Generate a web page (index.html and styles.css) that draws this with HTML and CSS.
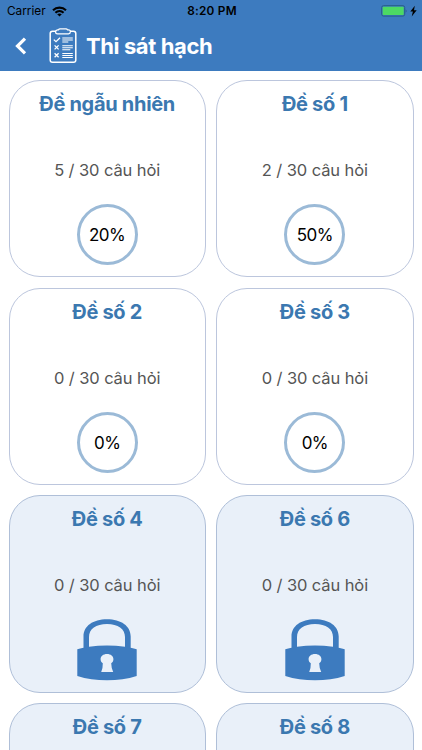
FILE: index.html
```html
<!DOCTYPE html>
<html lang="vi">
<head>
    <meta charset="UTF-8">
    <meta name="viewport" content="width=device-width, initial-scale=1.0">
    <title>Thi sát hạch</title>
    <link rel="stylesheet" href="styles.css">
</head>
<body>
    <svg class="sprite" aria-hidden="true">
        <symbol id="lock" viewBox="0 0 60 62">
            <path fill-rule="evenodd" d="M6.500 28.800V17.500C6.500 7 16 .3 30 .3s23.700 6.700 23.700 17.200V28.800Q57 29.500 59.700 30.300V57Q46 61.300 30 61.300T.3 57V30.300Q3 29.500 6.500 28.800ZM12 27.800Q21 26.600 30 26.600T48 27.800V18C48 10 41 5 30 5S12 10 12 18ZM30 35c-3.800 0-6.400 2.200-6.400 5.200 0 1.800.9 3.200 2.200 4.100Q26 48.500 24.200 53H36.200Q34.200 48.500 34.200 44.300c1.300-.9 2.200-2.300 2.200-4.100 0-3-2.600-5.200-6.400-5.200Z"/>
        </symbol>
    </svg>

    <header class="header">
        <div class="status-bar">
            <div class="carrier">
                <span>Carrier</span>
                <svg class="wifi" viewBox="0 0 15 11">
                    <path d="M1 4.200C4.600.7 10.400.7 14 4.200M3.400 6.700c2.400-2.200 5.800-2.200 8.200 0" fill="none" stroke="currentColor" stroke-width="2.100"/>
                    <path d="M5.200 8.200c1.400-1.100 3.200-1.100 4.600 0L7.500 10.600Z"/>
                </svg>
            </div>
            <span class="time">8:20 PM</span>
            <svg class="battery" viewBox="0 0 36 12">
                <rect x=".7" y=".7" width="23" height="10.400" rx="1.800" fill="none" stroke="#285d88" stroke-width="1"/>
                <rect x="1.700" y="1.700" width="21" height="8.400" rx=".8" fill="#4cd964"/>
                <path d="M24.800 4.200q1.400 1.700 0 3.500Z" fill="#20466f"/>
                <path d="M33.800.8 29.300 6.500h2.600L30.700 11.400l5-6.200H33Z"/>
            </svg>
        </div>
        <div class="nav-bar">
            <svg class="back" viewBox="0 0 12 18">
                <path d="M10 1.600 2.500 9 10 16.400" fill="none" stroke="#fff" stroke-width="3.200"/>
            </svg>
            <svg class="clipboard" viewBox="0 0 28 36" fill="none" stroke="#fff">
                <path d="M7 3.300H3.500Q1.200 3.300 1.200 5.600V32Q1.200 34.300 3.500 34.300H24.500Q26.800 34.300 26.800 32V5.600Q26.800 3.300 24.500 3.300H21" stroke-width="1.500"/>
                <path d="M9.400 1.900Q9.900.8 11 .8H17Q18.100.8 18.600 1.900H19.500Q21.400 1.900 21.400 3.800T19.500 5.800H8.500Q6.600 5.800 6.600 3.900T8.500 1.900Z" stroke-width="1.200"/>
                <path d="M4.800 11.600 7 13.700 11 9.800M5.600 17.400l4 4M9.600 17.400l-4 4M5.600 25.300l4 4M9.600 25.300l-4 4" stroke-width="1.300"/>
                <path d="M13.300 10h10.500M13.300 12h10.500M13.300 14h6M13.300 17.700h10.500M13.300 19.700h10.500M13.300 21.700h8M13.300 25.400h10.500M13.300 27.400h10.500M13.300 29.400h10.500" stroke-width="1.050"/>
            </svg>
            <h1>Thi sát hạch</h1>
        </div>
    </header>

    <main class="exams">
        <div class="card">
            <h2>Đề ngẫu nhiên</h2>
            <p>5 / 30 câu hỏi</p>
            <div class="percent">20%</div>
        </div>
        <div class="card">
            <h2>Đề số 1</h2>
            <p>2 / 30 câu hỏi</p>
            <div class="percent">50%</div>
        </div>
        <div class="card">
            <h2>Đề số 2</h2>
            <p>0 / 30 câu hỏi</p>
            <div class="percent">0%</div>
        </div>
        <div class="card">
            <h2>Đề số 3</h2>
            <p>0 / 30 câu hỏi</p>
            <div class="percent">0%</div>
        </div>
        <div class="card locked">
            <h2>Đề số 4</h2>
            <p>0 / 30 câu hỏi</p>
            <svg class="lock"><use href="#lock"/></svg>
        </div>
        <div class="card locked">
            <h2>Đề số 6</h2>
            <p>0 / 30 câu hỏi</p>
            <svg class="lock"><use href="#lock"/></svg>
        </div>
        <div class="card locked">
            <h2>Đề số 7</h2>
        </div>
        <div class="card locked">
            <h2>Đề số 8</h2>
        </div>
    </main>
</body>
</html>
```
FILE: styles.css
```css
* {
    margin: 0;
    padding: 0;
    box-sizing: border-box;
}

body {
    height: 100vh;
    display: flex;
    flex-direction: column;
    overflow: hidden;
    background: #fff;
    font-family: Inter, "Liberation Sans", sans-serif;
    color: #000;
}

.sprite {
    display: none;
}

.header {
    flex: none;
    height: 71px;
    background: #3d7bbf;
}

/* status bar */
.status-bar {
    height: 22px;
    padding: 0 5px 0 7px;
    display: grid;
    grid-template-columns: 1fr auto 1fr;
    align-items: center;
    font-size: 11.800px;
}

.carrier {
    display: flex;
    align-items: center;
    gap: 6px;
}

.wifi {
    width: 15px;
    height: 11px;
}

.time {
    font-weight: 600;
    letter-spacing: 0.25px;
}

.battery {
    width: 36px;
    height: 12px;
    justify-self: end;
}

/* navigation */
.nav-bar {
    height: 48px;
    padding-left: 15px;
    display: flex;
    align-items: center;
}

.back {
    width: 12px;
    height: 18px;
}

.clipboard {
    width: 28px;
    height: 36px;
    margin: 0 9px 0 22px;
}

h1 {
    color: #fff;
    font-size: 22px;
    font-weight: 700;
    letter-spacing: -0.4px;
}

/* exam list */
.exams {
    flex: 1;
    min-height: 0;
    overflow: hidden;
    padding: 9px 8.500px 0;
    display: grid;
    grid-template-columns: 1fr 1fr;
    grid-auto-rows: 197.300px;
    gap: 10.400px;
}

.card {
    display: flex;
    flex-direction: column;
    align-items: center;
    border: 1px solid #bcc6dd;
    border-radius: 31px;
}

.card.locked {
    background: #e9f0f9;
    border-color: #afbfd8;
}

.card h2 {
    margin-top: 9px;
    color: #3b78b0;
    font-size: 20px;
    font-weight: 700;
    letter-spacing: -0.3px;
    line-height: 28px;
}

.card p {
    margin-top: 40px;
    color: #555;
    font-size: 16.500px;
    letter-spacing: -0.1px;
    line-height: 24px;
}

.percent {
    width: 61px;
    height: 61px;
    margin-top: 22px;
    border: 3px solid #9bbad7;
    border-radius: 50%;
    font-size: 17px;
    letter-spacing: -0.5px;
    line-height: 56px;
    text-align: center;
}

.lock {
    width: 60px;
    height: 62px;
    margin-top: 21.500px;
    fill: #3d7bbf;
}
```
